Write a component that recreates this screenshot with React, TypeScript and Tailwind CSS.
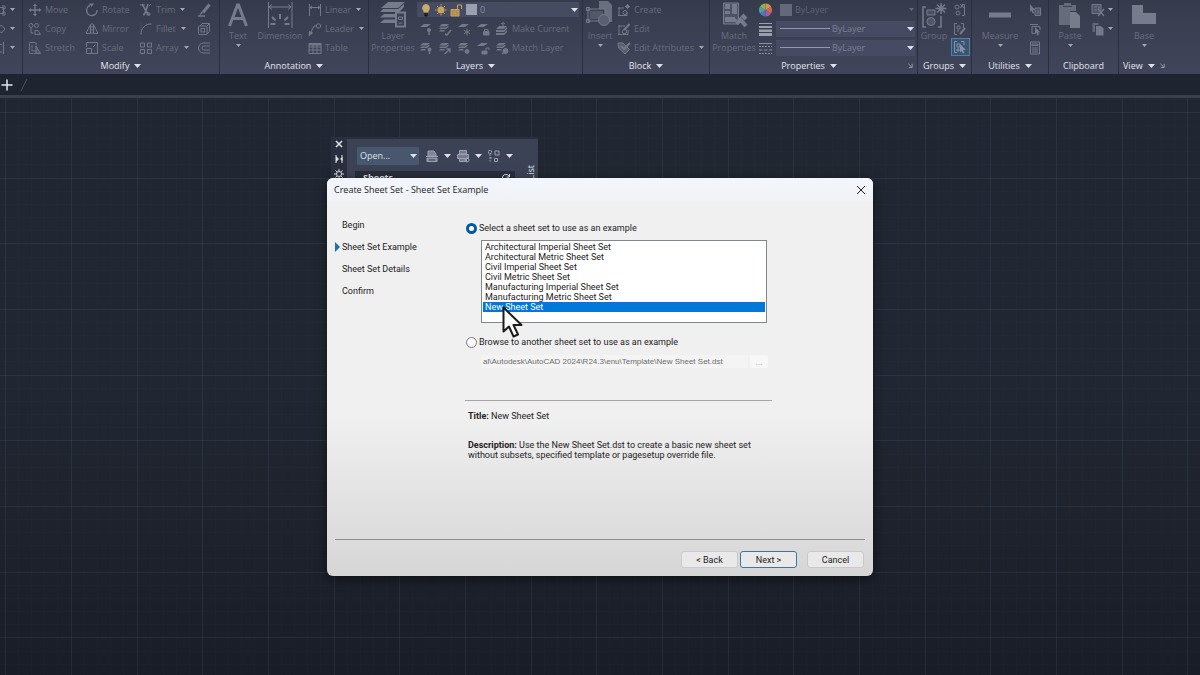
import { ReactNode, useState } from "react";
import clsx from "clsx";

interface GlyphProps {
  children: ReactNode;
  className?: string;
  box?: string;
}

/** Line-art icon wrapper, everything is drawn in currentColor */
function Glyph({ children, className = "size-3.5", box = "0 0 14 14" }: GlyphProps) {
  return (
    <svg
      viewBox={box}
      className={clsx("shrink-0", className)}
      fill="none"
      stroke="currentColor"
      strokeWidth="1"
      aria-hidden="true"
    >
      {children}
    </svg>
  );
}

function Caret({ bright }: { bright?: boolean }) {
  return (
    <svg
      viewBox="0 0 7 4"
      className={clsx("shrink-0", bright ? "w-[7px] h-1 text-[#dfe2ea]" : "w-[5px] h-[3px] text-[#a3a8b5]")}
      aria-hidden="true"
    >
      <path d="M0 0h7L3.5 4z" fill="currentColor" />
    </svg>
  );
}

function CornerArrow() {
  return (
    <svg viewBox="0 0 6 6" className="size-[5px] text-[#a8adba]" fill="none" stroke="currentColor" aria-hidden="true">
      <path d="M.5 1l4 4M5 1v4.500H1" />
    </svg>
  );
}

const sheetStack = (
  <g fill="currentColor" stroke="none">
    <path d="M4 2h7L8 4.500H1z" />
    <path d="M2.500 5.500h5l3-2v1.500L8 7H1z" />
    <path d="M2.500 8h4v1.500H1z" />
  </g>
);

const icons: Record<string, ReactNode> = {
  move: (
    <>
      <path d="M7 2v10M2 7h10" strokeWidth="1.4" />
      <path d="M7 .5l2 2.500H5zM7 13.500l2-2.500H5zM.5 7L3 5v4zM13.500 7L11 5v4z" fill="currentColor" stroke="none" />
    </>
  ),
  copy: (
    <>
      <circle cx="3" cy="3.500" r="2" />
      <circle cx="8.500" cy="3.500" r="2" />
      <path d="M3 6v5h2.500M7 8.500h3l2.500 4H7z" />
    </>
  ),
  stretch: (
    <>
      <path d="M4 1.500H1.500v11H10M4 1.500h4V6M4 4v6h4" strokeDasharray="3 .6" />
      <path d="M8 5l4.500 7.500H8z" fill="currentColor" fillOpacity=".4" />
    </>
  ),
  rotate: (
    <>
      <path d="M5 2.500A5.200 5.200 0 1 0 12 7" strokeWidth="1.4" />
      <path d="M4 .5h5L6.500 4z" fill="currentColor" stroke="none" />
    </>
  ),
  mirror: (
    <>
      <path d="M5.500 2.500v9H1zM8.500 2.500v9H13z" />
      <path d="M7 1v12" strokeDasharray="2 1" />
    </>
  ),
  scale: (
    <>
      <path d="M1.500 6V1.500h11v11H6" />
      <path d="M1.500 7.500h5v5h-5zM8 6l2.500-2.500" />
    </>
  ),
  trim: (
    <>
      <path d="M3 1l4 7M9 1L7 8M7 8l-2.500 4.500M7 8l3 4.500" strokeWidth="1.6" />
      <path d="M1 2h5M10 3l2-2" />
      <circle cx="9.500" cy="11" r="1.500" />
    </>
  ),
  fillet: (
    <>
      <path d="M2 12.500C2 6 6 2 12.500 2" />
      <path d="M2 12V1.500M12 2H7" strokeOpacity=".4" strokeDasharray="1 1" />
    </>
  ),
  array: <path d="M1.500 2h4v4h-4zM8.500 2h4v4h-4zM1.500 8.500h4v4h-4zM8.500 8.500h4v4h-4z" />,
  erase: (
    <>
      <path d="M12.500 1.500L6 9.500" strokeWidth="3" />
      <path d="M5.500 9L3 11.500M1 13h7" strokeWidth="1.4" />
    </>
  ),
  explode: (
    <>
      <rect x="1.500" y="4" width="8.500" height="8.500" rx="1" />
      <rect x="4" y="6.500" width="3.500" height="3.500" />
      <path d="M3.500 4l1.500-2.500h7.500v8L10 12M10 4l2.500-2.500" />
    </>
  ),
  offset: (
    <>
      <path d="M13 2H6.500a5 5 0 0 0 0 10H13" />
      <path d="M13 5H7a2 2 0 0 0 0 4h6" />
    </>
  ),
  linear: <path d="M1.500 1v12M12.500 1v12M2 4.500h10M4 3L2 4.500 4 6M10 3l2 1.500L10 6" />,
  leader: (
    <>
      <circle cx="10.500" cy="4" r="2.200" />
      <path d="M8.500 4H6L2 12" />
      <path d="M1 13.500l.5-4 3 1.500z" fill="currentColor" />
    </>
  ),
  table: (
    <>
      <path d="M1 2.500h12v10H1zM1 6h12M1 9h12M5 4v8.500M9 4v8.500" />
      <path d="M1 2h12v2.500H1z" fill="currentColor" stroke="none" />
    </>
  ),
  layOff: (
    <>
      <path d="M5 2h7L8 5H1z" fill="currentColor" stroke="none" />
      <circle cx="10" cy="8" r="2" fill="currentColor" stroke="none" />
      <path d="M10 9v4" strokeWidth="1.500" />
    </>
  ),
  layIso: (
    <>
      {sheetStack}
      <path d="M7 12l2 1 4-5" strokeWidth="1.500" />
    </>
  ),
  layFreeze: (
    <>
      <path d="M5 2h7L8 5H1z" fill="currentColor" stroke="none" />
      <path d="M10 6.500v7M7 8.300l6 3.400M13 8.300l-6 3.400" />
    </>
  ),
  layLock: (
    <>
      <path d="M5 2h7L8 5H1z" fill="currentColor" stroke="none" />
      <path d="M7.500 9.500h5.500V13H7.500z" fill="currentColor" />
      <path d="M8.500 9V7.500h3.500V9" />
    </>
  ),
  makeCurrent: (
    <>
      <path d="M4 4h8L9 7H1zM1 8h8l3-3v2L9 10H1zM1 11h8l3-3v2l-3 3H1z" fill="currentColor" stroke="none" />
      <path d="M8 4V1M6 2l2-1.500L10 2" />
    </>
  ),
  layOn: (
    <>
      {sheetStack}
      <circle cx="10.500" cy="8.500" r="2" fill="currentColor" stroke="none" />
      <path d="M10.500 9v4" strokeWidth="1.500" />
    </>
  ),
  layUniso: (
    <>
      {sheetStack}
      <path d="M6.500 13L12 8M8.500 8H12v3.500" strokeWidth="1.400" />
    </>
  ),
  layThaw: (
    <>
      {sheetStack}
      <circle cx="10" cy="10.500" r="2" fill="currentColor" />
    </>
  ),
  layUnlock: (
    <>
      <path d="M5 2h7L8 5H1z" fill="currentColor" stroke="none" />
      <path d="M6 10h5v3H6z" fill="currentColor" />
      <path d="M10 9.500V7h3v2" />
    </>
  ),
  matchLayer: (
    <>
      {sheetStack}
      <circle cx="10.500" cy="10" r="2.500" fill="currentColor" />
      <path d="M7 13l3-3" strokeWidth="1.500" />
    </>
  ),
  blockCreate: (
    <>
      <path d="M2 5h5M2 5v7.500h8V9M1 5h2M1 12.500h2" />
      <circle cx="8" cy="9.500" r="2" />
      <path d="M10.500 1v5M8 3.500h5M9 2l3 3M12 2L9 5" />
    </>
  ),
  blockEdit: (
    <>
      <path d="M2 4h6M2 4v8.500h9V8M1 4h2M1 12.500h2" />
      <circle cx="7.500" cy="9.500" r="2.200" />
      <path d="M7 8l5.500-6" strokeWidth="2" />
    </>
  ),
  attributes: (
    <>
      <path d="M1 2h5l6.500 6.500-4.500 4.500L1.500 7z" fill="currentColor" fillOpacity=".5" />
      <path d="M4 5l3 3 6-6" strokeWidth="2" />
    </>
  ),
  lineweight: (
    <g fill="currentColor" stroke="none">
      <path d="M1 1h13v1H1zM1 4h13v2H1zM1 7.500h13V10H1zM1 11h13v3H1z" />
    </g>
  ),
  linetype: (
    <>
      <path d="M1 2.500h13" />
      <path d="M1 5.500h13M1 12.500h13" strokeDasharray="2 1" />
      <path d="M1 9h13" strokeDasharray="3.500 1.500" />
    </>
  ),
  ungroup: (
    <>
      <path d="M9 1.500h2.500v11H9" />
      <circle cx="4" cy="4" r="2" />
      <circle cx="5" cy="10" r="2" />
      <path d="M7 1l4 4M11 1L7 5" />
    </>
  ),
  groupEdit: (
    <>
      <path d="M4 1.500H1.500v11H4M8 1.500h2.500V6" />
      <path d="M4 4h3v3H4zM4 9h2" />
      <path d="M7 12l5-6" strokeWidth="2" />
    </>
  ),
  groupSelect: (
    <>
      <path d="M4 1.500H1.500v11H4M8 1.500h3V5M4 4h3v3H4zM4 9h2v2H4z" />
      <path d="M7 4l6 6H10l1.500 3-1.500.5L8.500 11 7 12.500z" fill="currentColor" stroke="none" />
    </>
  ),
  quickSelect: (
    <>
      <path d="M2 1l5 6H5l1 3-1.500.5-1-3L2 9z" fill="currentColor" stroke="none" />
      <path d="M7 5h5.500v7.500H7zM8.500 8h3M8.500 10h3" fill="currentColor" fillOpacity=".4" />
    </>
  ),
  selectAll: (
    <>
      <path d="M4 4.500h8V8M4 4.500v7h3M2 2.500h8" />
      <path d="M7 5l5.500 5.500H10l1 2.500-1.500.5-1-2.500L7 12z" fill="currentColor" stroke="none" />
    </>
  ),
  calculator: (
    <>
      <path d="M2.500 1h9v12h-9z" />
      <path d="M4 3h6v1.500H4zM4 7h6M4 9h6M4 11h6" />
    </>
  ),
  cut: (
    <>
      <path d="M1 1.500h9v9H1zM3 4h3M3 7h3M8 3v3" fill="currentColor" fillOpacity=".4" />
      <path d="M7 6l6 7M13 6l-6 7" strokeWidth="1.400" />
    </>
  ),
  copyClip: (
    <g fill="currentColor" stroke="none">
      <path d="M1.500 1h6v2H4v7H1.500z" opacity=".7" />
      <path d="M5 4h5l2.500 2.500V13.500H5z" />
    </g>
  ),
};

interface ToolProps {
  icon: string;
  label?: string;
  caret?: boolean;
}

function Tool({ icon, label, caret }: ToolProps) {
  return (
    <button
      type="button"
      aria-label={label ?? icon}
      className="flex h-[19px] items-center gap-[3px] whitespace-nowrap text-[#696e7e]"
    >
      <Glyph className="size-3.5 text-[#747989]">{icons[icon]}</Glyph>
      {label && <span>{label}</span>}
      {caret && (
        <span className={clsx(label && "ml-0.5")}>
          <Caret />
        </span>
      )}
    </button>
  );
}

interface BigToolProps {
  lines: string[];
  caret?: boolean;
  className: string;
  children: ReactNode;
}

function BigTool({ lines, caret, className, children }: BigToolProps) {
  return (
    <button
      type="button"
      className={clsx("flex shrink-0 flex-col items-center whitespace-nowrap leading-3 text-[#696e7e]", className)}
    >
      <Glyph className="w-7 h-[30px] text-[#777c8c]" box="0 0 28 30">
        {children}
      </Glyph>
      {lines.map((line) => (
        <span key={line}>{line}</span>
      ))}
      {caret && (
        <span className="flex h-1.5 items-center">
          <Caret />
        </span>
      )}
    </button>
  );
}

interface PanelProps {
  title?: string;
  caret?: boolean;
  corner?: boolean;
  className: string;
  children: ReactNode;
}

/** One ribbon panel: tools on top, caption underneath */
function Panel({ title, caret = true, corner, className, children }: PanelProps) {
  return (
    <section className={clsx("flex h-[74px] flex-col border-r border-[#2a2f3d]", className)}>
      <div className="flex h-[57px]">{children}</div>
      <div className="flex h-[17px] items-center font-medium text-[#e3e6ee]">
        {title && (
          <h2 className="flex flex-1 items-center justify-center gap-[5px]">
            {title}
            {caret && <Caret bright />}
          </h2>
        )}
        {corner && (
          <span className="pr-1">
            <CornerArrow />
          </span>
        )}
      </div>
    </section>
  );
}

function LayerStack() {
  return (
    <>
      <g fill="currentColor" stroke="none">
        <path d="M9 2h17l-7 6H2z" />
        <path d="M4 9h15l6-5v3l-5 5H1z" />
        <path d="M5 14h11v3.500H1z" />
        <path d="M5 19.500h11V23H1z" />
      </g>
      <rect x="17" y="12.500" width="9" height="14" fill="#3b4053" strokeWidth="2" />
      <path d="M19.500 17h4v2.500h-4zM19.500 23h4" />
    </>
  );
}

function PropertySelect({ label }: { label: string }) {
  return (
    <div className="flex h-4 items-center gap-[2px] bg-[#464b63] pl-1 pr-[1px]">
      <span className="h-px w-[50px] shrink-0 bg-[#9398a8]" />
      <select aria-label={label} className="h-3.5 min-w-0 flex-1 appearance-none">
        <option>ByLayer</option>
      </select>
      <Caret bright />
    </div>
  );
}

function Ribbon() {
  return (
    <header className="flex overflow-hidden bg-linear-to-b from-[#363b4c] to-[#40455b] font-['Open_Sans',sans-serif] text-[9px]">
      <Panel className="w-[23px]">
        <div className="grid grid-rows-3">
          {["M0 4.500h3.500v6H0M2 3h3v3H2M2 9h3v3H2", "M0 4l2-.5L5 7l-3 3.500L0 10", "M0 3.500h2M0 11h2M3.500 1v12"].map((d) => (
            <button key={d} type="button" aria-label="Draw" className="flex items-center gap-1 text-[#747989]">
              <Glyph className="w-1.5 h-3.5" box="0 0 6 14">
                <path d={d} />
              </Glyph>
              <Caret />
            </button>
          ))}
        </div>
      </Panel>

      <Panel title="Modify" className="w-[197px]">
        <div className="grid grid-cols-[57px_54px_58px_1fr] pl-[5px]">
          <Tool icon="move" label="Move" />
          <Tool icon="rotate" label="Rotate" />
          <Tool icon="trim" label="Trim" caret />
          <Tool icon="erase" />
          <Tool icon="copy" label="Copy" />
          <Tool icon="mirror" label="Mirror" />
          <Tool icon="fillet" label="Fillet" caret />
          <Tool icon="explode" />
          <Tool icon="stretch" label="Stretch" />
          <Tool icon="scale" label="Scale" />
          <Tool icon="array" label="Array" caret />
          <Tool icon="offset" />
        </div>
      </Panel>

      <Panel title="Annotation" className="w-[149px]">
        <BigTool lines={["Text"]} caret className="w-9">
          <path d="M5.500 26L13.500 5h1l8 21M8.500 18.500h11" strokeWidth="3" />
        </BigTool>
        <BigTool lines={["Dimension"]} className="w-12">
          <path d="M2.500 2v26M26 2v26M3 7h22M6 4.500L3 7l3 2.500M22 4.500L25 7l-3 2.500" />
          <path d="M14 14v5M6 17l3.500 3.500M22 17l-3.500 3.500M4.500 24h5M18.500 24h5" strokeWidth="2" />
        </BigTool>
        <div className="flex flex-col pl-1">
          <Tool icon="linear" label="Linear" caret />
          <Tool icon="leader" label="Leader" caret />
          <Tool icon="table" label="Table" />
        </div>
      </Panel>

      <Panel title="Layers" className="w-[214px]">
        <BigTool lines={["Layer", "Properties"]} className="w-12">
          <LayerStack />
        </BigTool>
        <div className="flex min-w-0 flex-1 flex-col pr-[3px]">
          <div className="flex h-[19px] items-center">
            <div className="flex h-[15px] w-full items-center gap-[1px] bg-[#454b61] pl-0.5 pr-[1px]">
              <Glyph>
                <path d="M7 1a4 4 0 0 1 2.500 7v1.500h-5V8A4 4 0 0 1 7 1z" fill="#c9ad66" stroke="none" />
                <path d="M5 11h4M5.500 12.800h3" />
              </Glyph>
              <Glyph>
                <circle cx="7" cy="7" r="3.500" fill="#c9a35d" stroke="none" />
                <path d="M7 1v12M1 7h12M3 3l8 8M11 3l-8 8" stroke="#c9a35d" strokeDasharray="1.500 1" />
              </Glyph>
              <Glyph>
                <path d="M2 6.500h8V13H2z" fill="#b08f4f" stroke="#c9a35d" />
                <path d="M8.500 6V2h4v4M6 8.500v2.500" stroke="#c9a35d" />
              </Glyph>
              <span className="mx-0.5 size-[11px] shrink-0 bg-[#9a9fb2]" />
              <select aria-label="Layer" className="h-3.5 min-w-0 flex-1 appearance-none text-[#868b9b]">
                <option>0</option>
              </select>
              <Caret bright />
            </div>
          </div>
          <div className="grid grid-cols-[19px_19px_19px_19px_1fr] pl-0.5">
            <Tool icon="layOff" />
            <Tool icon="layIso" />
            <Tool icon="layFreeze" />
            <Tool icon="layLock" />
            <Tool icon="makeCurrent" label="Make Current" />
            <Tool icon="layOn" />
            <Tool icon="layUniso" />
            <Tool icon="layThaw" />
            <Tool icon="layUnlock" />
            <Tool icon="matchLayer" label="Match Layer" />
          </div>
        </div>
      </Panel>

      <Panel title="Block" className="w-[127px]">
        <BigTool lines={["Insert"]} caret className="w-[34px]">
          <path d="M13 1h9l4 4v17H13z" fill="currentColor" fillOpacity=".8" stroke="none" />
          <path d="M2 9h17v12H2zM.5 7.500h3v3h-3zM.5 19.500h3v3h-3z" fill="#3b4053" />
          <path d="M4 11h13v8H4z" fill="currentColor" fillOpacity=".4" stroke="none" />
          <circle cx="18" cy="20" r="5.500" fill="#5b6071" />
        </BigTool>
        <div className="flex flex-col">
          <Tool icon="blockCreate" label="Create" />
          <Tool icon="blockEdit" label="Edit" />
          <Tool icon="attributes" label="Edit Attributes" caret />
        </div>
      </Panel>

      <Panel title="Properties" corner className="w-[208px]">
        <BigTool lines={["Match", "Properties"]} className="w-12">
          <path d="M3.500 3h15v21h-15z" fill="currentColor" fillOpacity=".35" />
          <path d="M5 4h5v5H5zM12 4h5v10h-5zM5 11h5v3H5zM5 17h10v5H5z" fill="currentColor" stroke="none" />
          <path d="M13 18l5 5 2-2" strokeWidth="3" />
          <path d="M19 18l7 8M22 15l4 4" strokeWidth="4" />
        </BigTool>
        <div className="grid min-w-0 flex-1 grid-cols-[18px_1fr] grid-rows-3 items-center pr-0.5 text-[#7b8091]">
          <Glyph>
            <g stroke="none">
              <path d="M7.500 7V.5a6.500 6.500 0 0 1 5.600 3.200z" fill="#d9964a" />
              <path d="M7.500 7l5.600-3.300a6.500 6.500 0 0 1 0 6.600z" fill="#cf6a4d" />
              <path d="M7.500 7l5.600 3.300a6.500 6.500 0 0 1-5.600 3.200z" fill="#a55d9c" />
              <path d="M7.500 7v6.500a6.500 6.500 0 0 1-5.600-3.200z" fill="#5671c4" />
              <path d="M7.500 7l-5.600 3.300a6.500 6.500 0 0 1 0-6.600z" fill="#4fa3a6" />
              <path d="M7.500 7L1.900 3.700A6.500 6.500 0 0 1 7.500.5z" fill="#8fae58" />
            </g>
          </Glyph>
          <div className="flex h-[15px] items-center gap-[3px] pl-1 pr-[1px] text-[#5f6474]">
            <span className="size-3 shrink-0 bg-[#63687a]" />
            <select aria-label="Object color" className="h-3.5 min-w-0 flex-1 appearance-none">
              <option>ByLayer</option>
            </select>
            <Glyph className="h-[3px] w-[5px] text-[#666b7b]" box="0 0 7 4">
              <path d="M0 0h7L3.500 4z" fill="currentColor" stroke="none" />
            </Glyph>
          </div>
          <Glyph className="size-3.5 text-[#9a9fad]">{icons.lineweight}</Glyph>
          <PropertySelect label="Lineweight" />
          <Glyph className="size-3.5 text-[#8b90a0]">{icons.linetype}</Glyph>
          <PropertySelect label="Linetype" />
        </div>
      </Panel>

      <Panel title="Groups" className="w-[54px]">
        <BigTool lines={["Group"]} className="w-8">
          <path d="M6 7H3v20h3M18 27h3V16M21 9V7" strokeWidth="1.500" />
          <path d="M7 10h8v5H7z" fill="currentColor" fillOpacity=".3" />
          <circle cx="11" cy="21.500" r="4" fill="currentColor" fillOpacity=".4" />
          <path d="M21 3v11M15.500 8.500h11M17 4.500l8 8M25 4.500l-8 8" strokeWidth="1.500" />
        </BigTool>
        <div className="flex w-5 flex-col items-center">
          <Tool icon="ungroup" />
          <Tool icon="groupEdit" />
          <button
            type="button"
            aria-label="Group selection"
            className="flex h-[18px] w-[19px] shrink-0 items-center justify-center border border-[#4d82a8] bg-[#3d546e] text-[#8196ae]"
          >
            <Glyph>{icons.groupSelect}</Glyph>
          </button>
        </div>
      </Panel>

      <Panel title="Utilities" className="w-[77px]">
        <BigTool lines={["Measure"]} caret className="w-14">
          <path d="M3 12.500h22v5H3z" fill="currentColor" stroke="none" />
        </BigTool>
        <div className="flex flex-col">
          <Tool icon="quickSelect" />
          <Tool icon="selectAll" />
          <Tool icon="calculator" />
        </div>
      </Panel>

      <Panel title="Clipboard" caret={false} className="w-[70px]">
        <BigTool lines={["Paste"]} caret className="w-[42px]">
          <path d="M3 5h5V3h7v2h5v6h-6v14H3z" fill="currentColor" fillOpacity=".75" stroke="none" />
          <path d="M14 12h6l4 4v12H14z" fill="currentColor" stroke="none" />
          <path d="M7 6.500h9" stroke="#3b4053" />
        </BigTool>
        <div className="flex flex-col">
          <Tool icon="cut" caret />
          <Tool icon="copyClip" caret />
        </div>
      </Panel>

      <section className="flex h-[74px] flex-1 flex-col">
        <div className="flex h-[57px]">
          <BigTool lines={["Base"]} caret className="w-[50px]">
            <path d="M2 5h11v8h13v11H2z" fill="currentColor" stroke="none" />
          </BigTool>
        </div>
        <div className="flex h-[17px] items-center gap-[5px] pl-1 font-medium text-[#e3e6ee]">
          <h2>View</h2>
          <Caret bright />
          <CornerArrow />
        </div>
      </section>
    </header>
  );
}

/** Model space background with its major and minor grid */
function GridCanvas() {
  return (
    <svg className="absolute inset-0 size-full" aria-hidden="true">
      <defs>
        <pattern id="minor" x="5" y="14" width="197" height="197" patternUnits="userSpaceOnUse">
          <path
            d="M13.500 0v197M26.500 0v197M39.500 0v197M52.500 0v197M79.500 0v197M92.500 0v197M105.500 0v197M118.500 0v197M145.500 0v197M158.500 0v197M171.500 0v197M184.500 0v197M0 13.500h197M0 26.500h197M0 39.500h197M0 52.500h197M0 79.500h197M0 92.500h197M0 105.500h197M0 118.500h197M0 145.500h197M0 158.500h197M0 171.500h197M0 184.500h197"
            stroke="#a0b4d2"
            strokeOpacity=".012"
          />
        </pattern>
        <pattern id="major" x="5" y="14" width="197" height="197" patternUnits="userSpaceOnUse">
          <path
            d="M.5 0v197M66.500 0v197M132.500 0v197M0 .5h197M0 66.500h197M0 131.500h197"
            stroke="#a0b4d2"
            strokeOpacity=".09"
          />
        </pattern>
      </defs>
      <rect width="100%" height="100%" fill="url(#minor)" />
      <rect width="100%" height="100%" fill="url(#major)" />
    </svg>
  );
}

function SheetSetPalette() {
  return (
    <aside className="absolute left-1/2 top-[137px] -ml-[269px] flex h-60 w-[207px] bg-[#2a2f3d] font-['Open_Sans',sans-serif] text-[9px] text-[#dfe2ea]">
      <div className="flex w-4 flex-col items-center gap-[5px] pt-[2px]">
        <button type="button" aria-label="Close palette">
          <Glyph className="size-2.5" box="0 0 10 10">
            <path d="M2 2l6 6M8 2L2 8" strokeWidth="1.500" />
          </Glyph>
        </button>
        <button type="button" aria-label="Auto-hide">
          <Glyph className="size-2.5" box="0 0 10 10">
            <path d="M2 1v8M8 1v8" />
            <path d="M2 2l3 3-3 3zM8.500 3L6 5l2.500 2z" fill="currentColor" stroke="none" />
          </Glyph>
        </button>
        <button type="button" aria-label="Palette settings">
          <Glyph className="size-2.5" box="0 0 10 10">
            <circle cx="5" cy="5" r="2.500" />
            <path d="M5 0v2M5 8v2M0 5h2M8 5h2M1.500 1.500L3 3M7 7l1.500 1.500M8.500 1.500L7 3M3 7L1.500 8.500" />
          </Glyph>
        </button>
      </div>
      <div className="mt-0.5 flex flex-1 bg-[#3c4256]">
        <div className="w-[171px] pl-2">
          <div className="flex h-8 items-center gap-[5px] pl-0.5 pt-[2px]">
            <div className="flex h-[18px] w-[62px] shrink-0 items-center bg-[#46576e] pl-[3px] pr-0.5">
              <select aria-label="Sheet set" className="min-w-0 flex-1 appearance-none">
                <option>Open...</option>
              </select>
              <Caret bright />
            </div>
            <button type="button" aria-label="Publish to DWF" className="ml-px flex items-center gap-[5px] text-[#9da2b0]">
              <Glyph>
                <path d="M3 2h6l2 3v2H3zM1 7.500h12M2 9h10v3.500H2z" fill="currentColor" fillOpacity=".7" />
                <path d="M4 11h6" stroke="#3c4256" />
              </Glyph>
              <Caret bright />
            </button>
            <button type="button" aria-label="Publish to plotter" className="flex items-center gap-[5px] text-[#9da2b0]">
              <Glyph>
                <path d="M3.500 1.500h7V5h-7zM1.500 5.500h11v4h-11zM3.500 9.500h7v3h-7z" fill="currentColor" fillOpacity=".6" />
                <circle cx="11" cy="11" r="2" />
              </Glyph>
              <Caret bright />
            </button>
            <button type="button" aria-label="Sheet selections" className="flex items-center gap-[5px] text-[#9da2b0]">
              <Glyph>
                <path d="M1.500 1.500h3v3h-3zM3 5v7.500M3 9h3" strokeDasharray="2 1" />
                <path d="M8 2h4v4H8zM7.500 9.500h3v3h-3z" />
              </Glyph>
              <Caret bright />
            </button>
          </div>
          <div className="flex h-3.5 w-[160px] items-center justify-between bg-[#292e3b] pl-2 pr-1 font-bold">
            <span>Sheets</span>
            <Glyph className="size-2.5" box="0 0 10 10">
              <path d="M1.500 5A3.500 3 0 0 1 8 3M8.500 1v3h-3" />
            </Glyph>
          </div>
        </div>
        <div className="flex flex-1 items-start justify-end pr-px pt-[26px]">
          <span className="rotate-180 leading-3 [writing-mode:vertical-rl]">Sheet List</span>
        </div>
      </div>
    </aside>
  );
}

const steps = ["Begin", "Sheet Set Example", "Sheet Set Details", "Confirm"];

const examples = [
  "Architectural Imperial Sheet Set",
  "Architectural Metric Sheet Set",
  "Civil Imperial Sheet Set",
  "Civil Metric Sheet Set",
  "Manufacturing Imperial Sheet Set",
  "Manufacturing Metric Sheet Set",
  "New Sheet Set",
];

const radioClass =
  "size-[11px] shrink-0 appearance-none rounded-full border border-[#777] bg-[#fafafa] checked:border-3 checked:border-[#005a9e] checked:bg-white";

const buttonClass = "h-[17px] w-[57px] rounded-[3px] border bg-[#e9e9e9]";

function CreateSheetSetDialog() {
  const [source, setSource] = useState("example");
  const [selected, setSelected] = useState("New Sheet Set");

  return (
    <div
      role="dialog"
      aria-labelledby="dialog-title"
      className="absolute left-1/2 top-[178px] flex h-[398px] w-[546px] -translate-x-1/2 flex-col rounded-md bg-linear-to-b from-[#f0f0f0] from-60% to-[#d6d6d6] font-['Roboto',Arial,sans-serif] text-[9px] leading-[10px] text-[#222] shadow-[0_3px_12px_rgba(0,0,0,0.5)]"
    >
      <div className="flex h-6 items-center justify-between rounded-t-md bg-linear-to-b from-[#f3f6fd] to-[#f0f2f6] px-[7px] font-['Open_Sans',sans-serif]">
        <h1 id="dialog-title">Create Sheet Set - Sheet Set Example</h1>
        <button type="button" aria-label="Close">
          <Glyph className="size-2.5" box="0 0 10 10">
            <path d="M1 1l8 8M9 1L1 9" />
          </Glyph>
        </button>
      </div>

      <div className="flex flex-1">
        <ol className="w-[138px] pl-2 pt-3">
          {steps.map((step, i) => (
            <li key={step} className="flex h-[22px] items-center gap-0.5">
              <span
                className={clsx(
                  "h-[10px] w-[5px] [clip-path:polygon(0_0,100%_50%,0_100%)]",
                  i === 1 && "bg-[#1b6fb3]",
                )}
              />
              {step}
            </li>
          ))}
        </ol>

        <div className="w-[307px] pt-[18px]">
          <label className="flex h-4 items-center gap-0.5 pl-[1px]">
            <input
              type="radio"
              name="source"
              className={radioClass}
              checked={source === "example"}
              onChange={() => setSource("example")}
            />
            Select a sheet set to use as an example
          </label>

          <div className="relative mb-[11px] ml-4 mr-[5px] mt-1">
            <select
              size={8}
              aria-label="Sheet sets"
              value={selected}
              onChange={(e) => setSelected(e.target.value)}
              className="block h-[83px] w-full overflow-hidden rounded-none border border-[#82878f] bg-white px-px py-[1px]"
            >
              {examples.map((name) => (
                <option
                  key={name}
                  className="h-[10px] min-h-0 px-0.5 py-0 leading-[10px] text-[#222] checked:bg-linear-to-r checked:from-[#0078d7] checked:to-[#0078d7] checked:[-webkit-text-fill-color:#fff]"
                >
                  {name}
                </option>
              ))}
            </select>
            <svg viewBox="0 0 22 32" className="pointer-events-none absolute left-[21px] top-[66px] h-8 w-[22px]" aria-hidden="true">
              <path
                d="M1.500 1.500v24l5.500-5 4.500 10 4.500-2-4.500-9.500h8z"
                fill="#fff"
                stroke="#1c1c1c"
                strokeWidth="2"
                strokeLinejoin="round"
              />
            </svg>
          </div>

          <label className="flex h-4 items-center gap-0.5 pl-[1px]">
            <input
              type="radio"
              name="source"
              className={radioClass}
              checked={source === "browse"}
              onChange={() => setSource("browse")}
            />
            Browse to another sheet set to use as an example
          </label>

          <div className="mt-[5px] flex gap-0.5 pl-4 pr-1">
            <input
              aria-label="Sheet set file"
              readOnly
              disabled
              value="al\Autodesk\AutoCAD 2024\R24.3\enu\Template\New Sheet Set.dst"
              className="h-[13px] min-w-0 flex-1 bg-[#f4f4f4] pl-0.5 font-['Liberation_Sans',Arial,sans-serif] text-[8px] text-[#6d6d6d]"
            />
            <button type="button" aria-label="Browse" disabled className="h-[13px] w-[18px] rounded-xs bg-[#f7f7f7] text-[#aaa]">
              ...
            </button>
          </div>

          <hr className="mt-8 border-[#a5a5a5]" />

          <p className="ml-[3px] mt-[10px]">
            <b>Title:</b> New Sheet Set
          </p>
          <p className="ml-[3px] mt-[19px] w-[290px]">
            <b>Description:</b> Use the New Sheet Set.dst to create a basic new sheet set without subsets, specified
            template or pagesetup override file.
          </p>
        </div>
      </div>

      <div className="mx-2 flex h-[37px] border-t border-[#8f8f8f] pr-px pt-[11px]">
        <button type="button" className={clsx(buttonClass, "ml-auto border-[#c6ccd1]")}>
          &lt; Back
        </button>
        <button type="button" className={clsx(buttonClass, "ml-0.5 border-[#3a76a8]")}>
          Next &gt;
        </button>
        <button type="button" className={clsx(buttonClass, "ml-[10px] border-[#c9c9c9]")}>
          Cancel
        </button>
      </div>
    </div>
  );
}

export default function App() {
  return (
    <div className="relative flex min-h-screen flex-col overflow-hidden bg-[#1f2530]">
      <Ribbon />
      <nav className="flex h-[21px] items-center gap-[7px] text-[#e3e6ec]">
        <button type="button" aria-label="New tab" className="ml-px">
          <Glyph className="size-3" box="0 0 12 12">
            <path d="M6 .5v11M.5 6h11" strokeWidth="1.500" />
          </Glyph>
        </button>
        <Glyph className="h-3.5 w-2 text-[#4a5160]" box="0 0 8 14">
          <path d="M7 1L1 13" />
        </Glyph>
      </nav>
      <main className="relative flex-1 border-t-3 border-[#3b404e] bg-linear-to-b from-[#212732] from-50% to-[#191d28]">
        <GridCanvas />
      </main>
      <SheetSetPalette />
      <CreateSheetSetDialog />
    </div>
  );
}
